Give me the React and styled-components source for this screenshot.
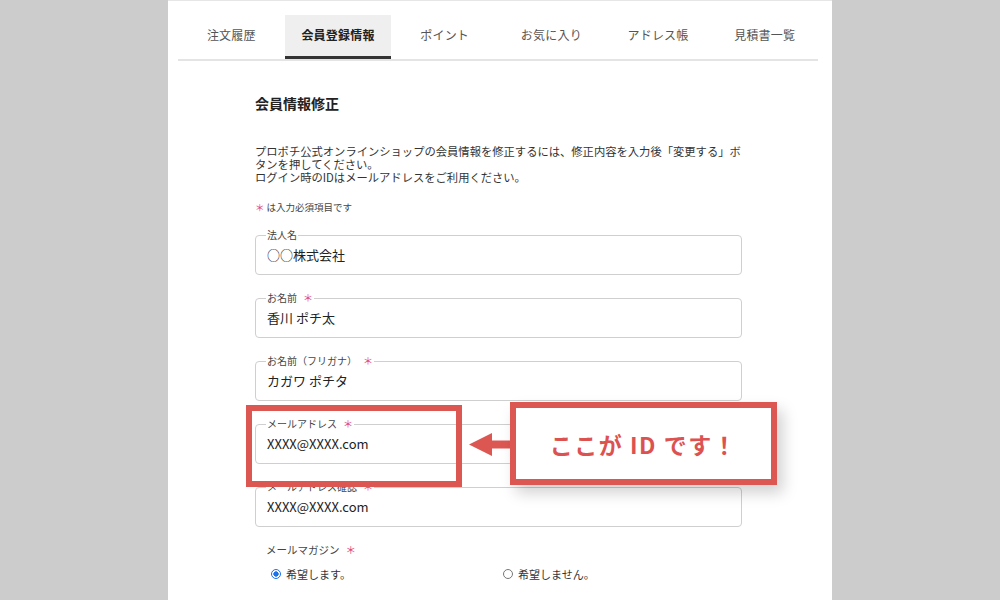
import React from "react";
import styled, { createGlobalStyle } from "styled-components";

const Global = createGlobalStyle`
  html, body {
    margin: 0;
    padding: 0;
    background: #cccccc;
    font-family: "Noto Sans CJK JP", "Noto Sans", sans-serif;
    color: #333;
  }
`;

const Panel = styled.div`
  width: 664px;
  height: 600px;
  margin: 0 auto;
  background: #fff;
  border-top: 1px solid #e6e6e6;
  box-sizing: border-box;
  overflow: hidden;
`;

const TabBar = styled.nav`
  display: flex;
  margin: 14px 14px 0 10px;
  border-bottom: 2px solid #e4e4e4;
`;

const Tab = styled.div`
  flex: 1;
  height: 44px;
  box-sizing: border-box;
  padding-bottom: 5px;
  display: flex;
  align-items: center;
  justify-content: center;
  font-size: 12px;
  letter-spacing: 0.2px;
  color: ${(p) => (p.$active ? "#222" : "#555")};
  font-weight: ${(p) => (p.$active ? 700 : 400)};
  background: ${(p) => (p.$active ? "#efefef" : "transparent")};
  box-shadow: ${(p) => (p.$active ? "inset 0 -3px 0 #333" : "none")};
`;

const Content = styled.div`
  width: 487px;
  padding-left: 87px;
`;

const Title = styled.h2`
  margin: 32px 0 0;
  font-size: 14px;
  line-height: 20px;
  font-weight: 700;
  color: #222;
`;

const Lead = styled.p`
  margin: 32px 0 0;
  font-size: 11.3px;
  line-height: 13px;
  white-space: nowrap;
  color: #333;
`;

const Note = styled.p`
  margin: 16px 0 0;
  font-size: 9.5px;
  line-height: 14px;
  color: #444;
`;

const Star = styled.span`
  color: #e0457b;
  margin: ${(p) => p.$gap || "0 2px 0 0"};
`;

const Fields = styled.div`
  margin-top: 15px;
  display: flex;
  flex-direction: column;
  gap: 17px;
`;

const FieldWrap = styled.div`
  position: relative;
  z-index: ${(p) => (p.$top ? 2 : 1)};
`;

const Box = styled.fieldset`
  margin: 0;
  padding: 0 11px 5px;
  border: 1px solid #cfcfcf;
  border-radius: 4px;
  min-width: 0;
`;

const Legend = styled.legend`
  padding: 0 1px;
  margin-left: -1px;
  font-size: 10px;
  line-height: 12px;
  color: #444;
`;

const Value = styled.div`
  height: 28px;
  line-height: 28px;
  font-size: 13px;
  color: #222;
`;

const Highlight = styled.div`
  position: absolute;
  left: -9px;
  top: -13px;
  width: 216px;
  height: 82px;
  box-sizing: border-box;
  border: 6px solid #dc5752;
  pointer-events: none;
`;

const Arrow = styled.svg`
  position: absolute;
  left: 214px;
  top: 15px;
`;

const Callout = styled.div`
  position: absolute;
  left: 255px;
  top: -16px;
  width: 267px;
  height: 83px;
  box-sizing: border-box;
  border: 6px solid #dc5752;
  background: #fff;
  box-shadow: 6px 8px 14px rgba(0, 0, 0, 0.18);
  display: flex;
  align-items: center;
  justify-content: center;
  font-size: 23px;
  font-weight: 700;
  letter-spacing: 1.5px;
  color: #dc5250;
`;

const Magazine = styled.div`
  margin-top: 16px;
  padding-left: 11px;
`;

const MagLabel = styled.div`
  font-size: 10.5px;
  line-height: 14px;
  color: #444;
`;

const Options = styled.div`
  display: flex;
  margin-top: 9px;
  padding-left: 5px;
`;

const Option = styled.label`
  width: 232px;
  display: flex;
  align-items: center;
  gap: 5px;
  font-size: 11px;
  color: #333;
`;

const Radio = styled.span`
  width: 10px;
  height: 10px;
  box-sizing: border-box;
  border-radius: 50%;
  border: 1px solid ${(p) => (p.$on ? "#1a73e8" : "#777")};
  background: ${(p) =>
    p.$on ? "radial-gradient(circle, #1a73e8 0 2.4px, #fff 2.9px)" : "#fff"};
`;

const tabs = ["注文履歴", "会員登録情報", "ポイント", "お気に入り", "アドレス帳", "見積書一覧"];

const fields = [
  { label: "法人名", value: "○○株式会社" },
  { label: "お名前", value: "香川 ポチ太", req: true },
  { label: "お名前（フリガナ）", value: "カガワ ポチタ", req: true },
  { label: "メールアドレス", value: "XXXX@XXXX.com", req: true, id: true },
  { label: "メールアドレス確認", value: "XXXX@XXXX.com", req: true },
];

export default function App() {
  return (
    <>
      <Global />
      <Panel>
        <TabBar>
          {tabs.map((t) => (
            <Tab key={t} $active={t === "会員登録情報"}>
              {t}
            </Tab>
          ))}
        </TabBar>
        <Content>
          <Title>会員情報修正</Title>
          <Lead>
            プロポチ公式オンラインショップの会員情報を修正するには、修正内容を入力後「変更する」ボ
            <br />
            タンを押してください。
            <br />
            ログイン時のIDはメールアドレスをご利用ください。
          </Lead>
          <Note>
            <Star>＊</Star>は入力必須項目です
          </Note>
          <Fields>
            {fields.map((f) => (
              <FieldWrap key={f.label} $top={f.id}>
                <Box>
                  <Legend>
                    {f.label}
                    {f.req && <Star $gap="0 0 0 6px">＊</Star>}
                  </Legend>
                  <Value>{f.value}</Value>
                </Box>
                {f.id && (
                  <>
                    <Highlight />
                    <Arrow width="42" height="23" viewBox="0 0 42 23">
                      <polygon points="0,11.5 23,0 23,7.5 42,7.5 42,15.5 23,15.5 23,23" fill="#dc5752" />
                    </Arrow>
                    <Callout>ここが ID です！</Callout>
                  </>
                )}
              </FieldWrap>
            ))}
          </Fields>
          <Magazine>
            <MagLabel>
              メールマガジン<Star $gap="0 0 0 6px">＊</Star>
            </MagLabel>
            <Options>
              <Option>
                <Radio $on />
                希望します。
              </Option>
              <Option>
                <Radio />
                希望しません。
              </Option>
            </Options>
          </Magazine>
        </Content>
      </Panel>
    </>
  );
}
